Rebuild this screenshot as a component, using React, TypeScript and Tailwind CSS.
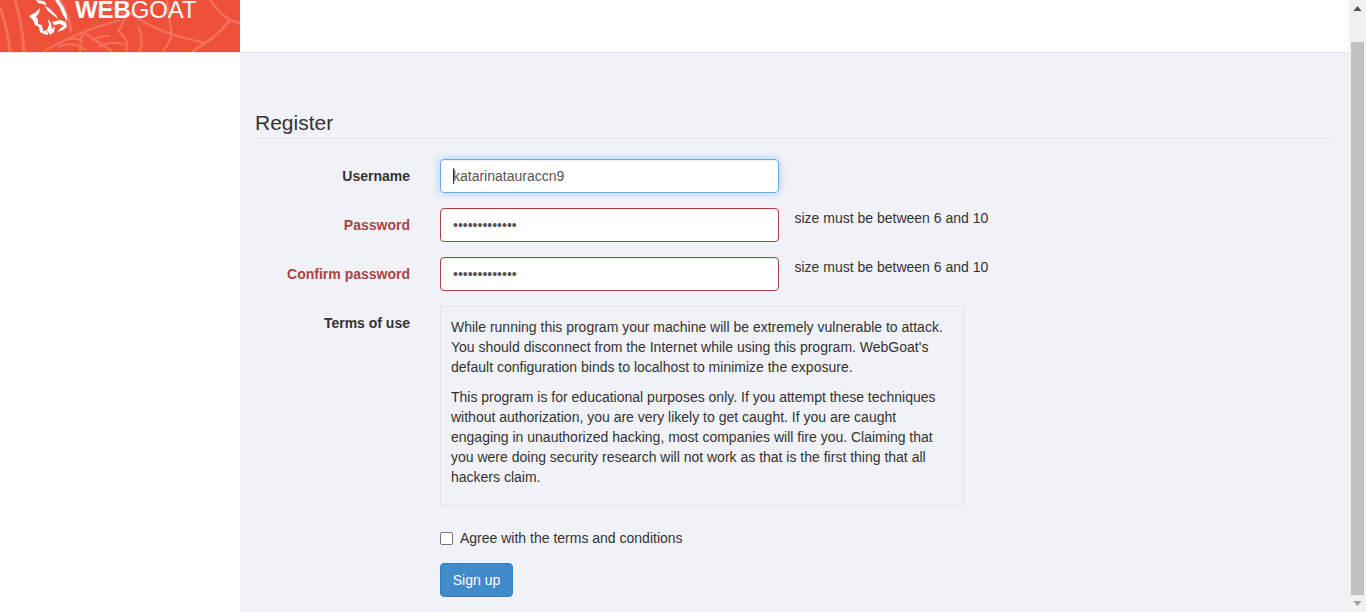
const sans = { fontFamily: '"Liberation Sans", Arial, sans-serif' };

function Logo() {
  return (
    <div className="relative w-[240px] h-[52px] shrink-0 overflow-hidden bg-[#ef5039]">
      {/* spider web behind the logo */}
      <svg className="absolute inset-0" width="240" height="52" viewBox="0 0 240 52" fill="none" stroke="#f4705d" strokeWidth="2.2">
        <path strokeWidth="3" d="M0 7C5 22 9 38 10 52M15 0C20 16 23 34 24 52M60 0C66 10 70 20 71 32" />
        <path d="M83 32C70 38 54 45 43 52M83 32C81 38 80 45 80 52M83 32C92 38 104 46 113 52M83 32C92 28 106 24 120 20" />
        <path d="M66 40C72 38 78 38 84 42M58 47C66 43 76 43 86 50M92 40C98 37 104 36 110 36M98 47C106 43 116 42 124 44" />
        <path d="M130 13C144 23 158 30 172 34M167 0C168 12 170 24 172 34M172 34C170 40 167 46 163 52M172 34C182 38 194 40 205 43" />
        <path strokeWidth="2.6" d="M210 0C216 8 222 15 230 20L240 23M230 20C222 30 214 38 205 43C200 46 196 49 192 52" />
        <path d="M120 33C126 37 128 44 126 52M138 26C142 34 143 42 140 52M126 15L118 33M104 0C108 6 116 10 126 15" />
      </svg>
      {/* lion head */}
      <svg className="absolute inset-0" width="240" height="52" viewBox="0 0 240 52" fill="#fff">
        <path d="M36 0L44 1L47 5L42 4L38 3Z" />
        <path d="M44 5L50 9L56 15L58 19L53 15L48 11Z" />
        <path d="M55 0L59 0L64 8L67 16L67 21L63 15L60 8Z" />
        <path d="M29 16L36 12L40 8L39 13L36 17L38 19L33 20Z" />
        <path d="M33 20L38 19L38 24L42 25L43 31L47 30L48 35L44 34L40 32L39 27L35 25Z" />
        <path d="M47 30L49 25L48 19L51 23L52 29L55 26L54 32L50 35Z" />
        <path d="M52 22L60 20L66 22L67 27L63 30L57 32L61 28L64 26L60 24L54 25Z" />
      </svg>
      <div className="absolute left-[75px] top-[-4px] text-[24px] leading-[28px] text-white tracking-[-0.1px]" style={sans}>
        <span className="font-bold">WEB</span>GOAT
      </div>
    </div>
  );
}

function Field({ label, value, error, focus, type = 'text' }: { label: string; value: string; error?: boolean; focus?: boolean; type?: string }) {
  return (
    <div className="flex mb-[15px] h-[34px]">
      <label className={`w-[155px] pt-[7px] text-right text-[14px] leading-[20px] font-bold ${error ? 'text-[#a94442]' : 'text-[#333]'}`}>{label}</label>
      <div className="relative ml-[30px] w-[339px] h-[34px]">
        <input
          readOnly
          type={type}
          value={value}
          className={`w-full h-full px-3 py-1.5 text-[14px] leading-[20px] text-[#555] bg-white rounded border outline-none ${
            focus
              ? 'border-[#66afe9] shadow-[inset_0_1px_1px_rgba(0,0,0,0.075),0_0_8px_rgba(102,175,233,0.6)]'
              : error
                ? 'border-[#a94442] shadow-[inset_0_1px_1px_rgba(0,0,0,0.075)]'
                : 'border-[#ccc]'
          }`}
        />
        {focus && <span className="absolute left-[13px] top-[9px] w-px h-[16px] bg-[#333]" />}
      </div>
      {error && <span className="ml-[15.5px] text-[14px] leading-[20px] text-[#333]">size must be between 6 and 10</span>}
    </div>
  );
}

function Scrollbar() {
  return (
    <div className="w-[17px] h-full shrink-0 bg-[#f1f1f1] flex flex-col items-center">
      <svg className="h-[17px] w-[17px] shrink-0" viewBox="0 0 17 17" fill="#505050"><path d="M8.5 6L12.5 11H4.5Z" /></svg>
      <div className="w-[13px] mt-[25px] h-[553px] bg-[#c1c1c1]" />
      <svg className="h-[17px] w-[17px] shrink-0" viewBox="0 0 17 17" fill="#a3a3a3"><path d="M8.5 11L4.5 6H12.5Z" /></svg>
    </div>
  );
}

export default function App() {
  return (
    <div className="flex h-[612px] w-full overflow-hidden bg-white text-[#333]" style={sans}>
      <div className="flex-1 flex flex-col min-w-0">
        <header className="h-[53px] shrink-0 flex bg-white border-b border-[#e3e5ea]">
          <Logo />
        </header>
        <div className="flex flex-1 min-h-0">
          <aside className="w-[240px] shrink-0 bg-white" />
          <main className="flex-1 bg-[#f1f2f7] pl-[15px] pr-[15px] pt-[58px]">
            <h3 className="text-[21px] leading-[23px] font-normal text-[#333] pb-[4px] border-b border-[#e4e6ea] mb-[20px]">Register</h3>
            <Field label="Username" value="katarinatauraccn9" focus />
            <Field label="Password" value="0123456789abc" type="password" error />
            <Field label="Confirm password" value="0123456789abc" type="password" error />
            <div className="flex">
              <label className="w-[155px] pt-[7px] text-right text-[14px] leading-[20px] font-bold text-[#333]">Terms of use</label>
              <div className="ml-[30px] w-[524px] h-[200px] border border-[#e3e3e3] bg-[#f1f2f7] p-[10px] text-[14px] leading-[20px] text-[#333]">
                <p className="mb-[10px]">While running this program your machine will be extremely vulnerable to attack. You should disconnect from the Internet while using this program. WebGoat's default configuration binds to localhost to minimize the exposure.</p>
                <p>This program is for educational purposes only. If you attempt these techniques without authorization, you are very likely to get caught. If you are caught engaging in unauthorized hacking, most companies will fire you. Claiming that you were doing security research will not work as that is the first thing that all hackers claim.</p>
              </div>
            </div>
            <div className="ml-[185px] mt-[22px] flex items-center h-[20px] text-[14px] leading-[20px] text-[#333]">
              <span className="w-[13px] h-[13px] rounded-[2px] border border-[#767676] bg-white" />
              <span className="ml-[7px]">Agree with the terms and conditions</span>
            </div>
            <button className="block ml-[185px] mt-[15px] w-[73px] h-[34px] rounded bg-[#428bca] border border-[#357ebd] text-white text-[14px] leading-[20px]">Sign up</button>
          </main>
        </div>
      </div>
      <Scrollbar />
    </div>
  );
}
